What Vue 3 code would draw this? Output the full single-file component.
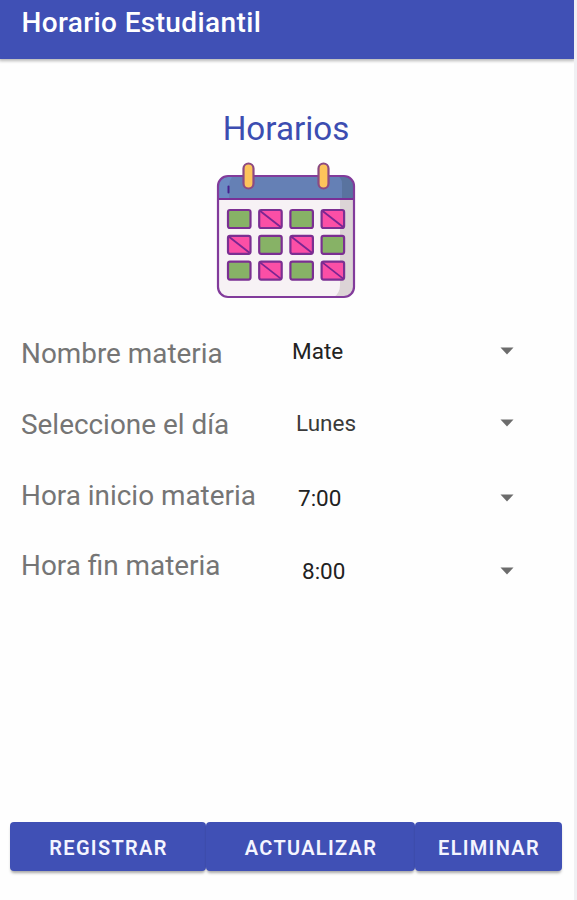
<template>
  <div class="screen">
    <header class="toolbar">Horario Estudiantil</header>

    <main class="content">
      <h1 class="title">Horarios</h1>

      <svg class="calendar" width="140" height="138" viewBox="0 0 140 138">
        <rect x="2" y="15" width="136" height="121" rx="10" fill="#f7f2f5" />
        <path d="M124 15h4a10 10 0 0 1 10 10v101a10 10 0 0 1-10 10h-10q6-4 6-12z" fill="#dcd4d6" />
        <path d="M2 37V25a10 10 0 0 1 10-10h116a10 10 0 0 1 10 10v12z" fill="#6580b5" />
        <path d="M126 37V22q0-4-4-7h6a10 10 0 0 1 10 10v12z" fill="#59739f" />
        <path d="M3 37V25q0-8 9-9h4q-3 4-3 9v12z" fill="#6c8ac2" />
        <path d="M2 38h136" stroke="#7a2f96" stroke-width="2" />
        <rect x="2" y="15" width="136" height="121" rx="10" fill="none" stroke="#823b9b" stroke-width="2.200" />
        <path d="M12.500 25.500v6" stroke="#46208d" stroke-width="2" stroke-linecap="round" />
        <rect x="27.500" y="2.500" width="10" height="25" rx="5" fill="#fdc45b" stroke="#8c4a82" stroke-width="2.200" />
        <rect x="102.500" y="2.500" width="10" height="25" rx="5" fill="#fdc45b" stroke="#8c4a82" stroke-width="2.200" />
        <g v-for="cell in cells" :key="cell.id" :transform="`translate(${cell.x} ${cell.y})`">
          <rect width="22.500" height="18" rx="2" :fill="cell.busy ? '#fb4fa6' : '#87b266'" stroke="#7b2f92" stroke-width="2.200" />
          <path v-if="cell.busy" d="M1 1l20.500 16" stroke="#7b2592" stroke-width="1.800" />
        </g>
      </svg>

      <section class="form">
        <div class="labels">
          <label v-for="field in fields" :key="field.id">{{ field.label }}</label>
        </div>
        <div class="spinners">
          <div v-for="field in fields" :key="field.id" class="spinner" :class="field.id">
            <span>{{ field.value }}</span>
            <svg class="arrow" width="14" height="8" viewBox="0 0 14 8">
              <path d="M0.500 0.500h13L7 7.500z" fill="#6c6c6c" />
            </svg>
          </div>
        </div>
      </section>
    </main>

    <footer class="actions">
      <button class="register">REGISTRAR</button>
      <button class="update">ACTUALIZAR</button>
      <button class="remove">ELIMINAR</button>
    </footer>
  </div>
</template>

<script setup>
const fields = [
  { id: 'subject', label: 'Nombre materia', value: 'Mate' },
  { id: 'day', label: 'Seleccione el día', value: 'Lunes' },
  { id: 'start', label: 'Hora inicio materia', value: '7:00' },
  { id: 'end', label: 'Hora fin materia', value: '8:00' }
]

// 3 rows x 4 columns, alternating free and busy
const cells = []
for (let row = 0; row < 3; row++) {
  for (let col = 0; col < 4; col++) {
    cells.push({
      id: row * 4 + col,
      x: 12 + col * 31.2,
      y: 49 + row * 25.8,
      busy: (row + col) % 2 === 1
    })
  }
}
</script>

<style>
body {
  margin: 0;
  background: #fefefe;
}
</style>

<style scoped>
.screen {
  box-sizing: border-box;
  display: flex;
  flex-direction: column;
  height: 900px;
  overflow: hidden;
  border-right: 3px solid #f0f0f3;
  background: #fefefe;
  font-family: Roboto, sans-serif;
}

.toolbar {
  box-sizing: border-box;
  flex: none;
  height: 59px;
  padding: 6px 0 0 21.500px;
  background: #4050b5;
  box-shadow: 0 1px 3px 1px rgba(0, 0, 0, 0.28);
  color: #fff;
  font-size: 28px;
  font-weight: 500;
  letter-spacing: 0.38px;
  line-height: 33px;
  white-space: nowrap;
}

.content {
  display: flex;
  flex: 1;
  flex-direction: column;
}

.title {
  margin: 50px 0 0;
  padding-right: 2px;
  color: #3c4db1;
  font-size: 33.200px;
  font-weight: 400;
  line-height: 40px;
  text-align: center;
}

.calendar {
  display: block;
  margin: 12px 0 0 216px;
}

.form {
  display: flex;
  margin-top: 37px;
}

.labels {
  display: flex;
  flex-direction: column;
  width: 269px;
  padding: 0.300px 0 0 21px;
}

.labels label {
  height: 70.7px;
  color: #757575;
  font-size: 27.9px;
  line-height: 35px;
  white-space: nowrap;
}

.spinners {
  width: 223.500px;
}

.spinner {
  display: flex;
  align-items: center;
  justify-content: space-between;
  height: 30px;
  margin-bottom: 42px;
  color: #222;
  font-size: 22.500px;
  line-height: 30px;
}

.spinner.subject {
  padding-left: 2px;
}

.spinner.day {
  margin-bottom: 45px;
  padding-left: 6px;
  color: #3a3a3a;
}

.spinner.start {
  margin-bottom: 43px;
  padding-left: 8px;
}

.spinner.end {
  padding-left: 12px;
}

.arrow {
  flex: none;
}

.actions {
  display: flex;
  flex: none;
  height: 49px;
  margin: 0 12px 29px 10px;
}

.actions button {
  box-sizing: border-box;
  padding: 2px 0 0 1px;
  border: 0;
  border-radius: 4px;
  background: #4050b5;
  box-shadow: 0 3px 3px -1px rgba(0, 0, 0, 0.35);
  color: #f4f5ff;
  font-family: inherit;
  font-size: 20px;
  font-weight: 600;
  letter-spacing: 1.3px;
  text-align: center;
}

.register {
  width: 196px;
}

.update {
  width: 209px;
}

.remove {
  width: 147px;
}
</style>
